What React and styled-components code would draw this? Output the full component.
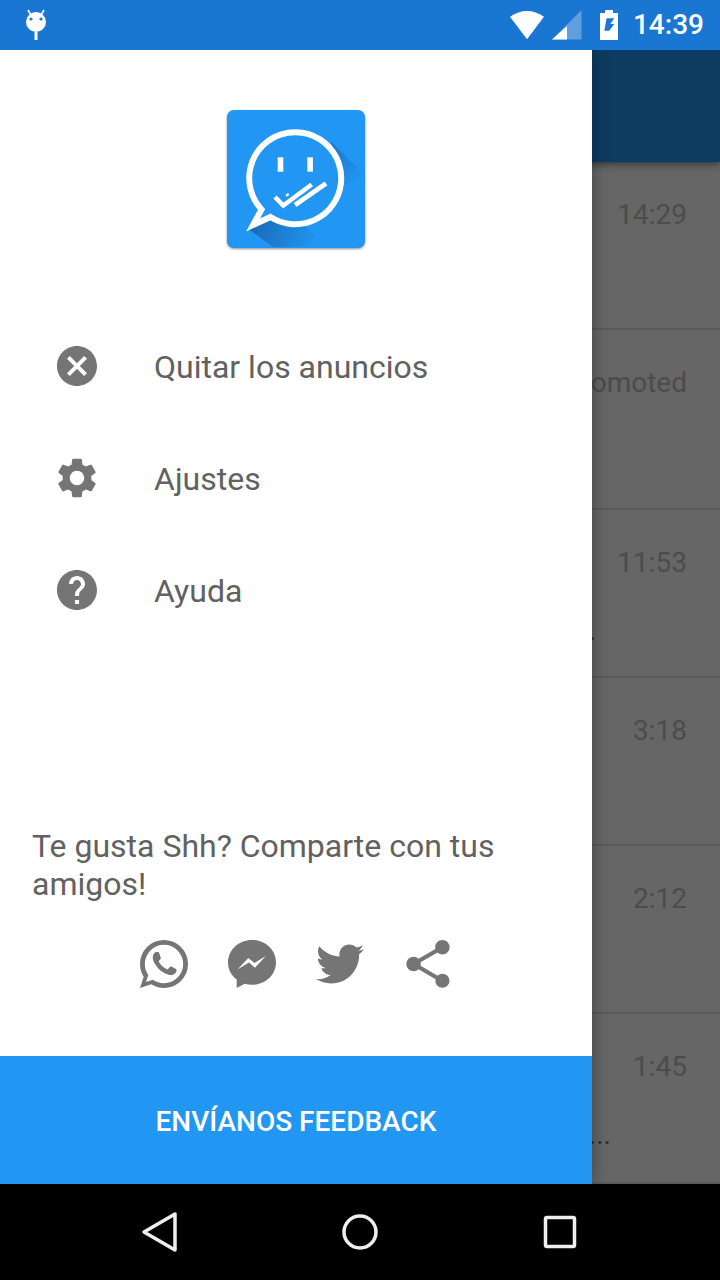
import styled, { createGlobalStyle } from "styled-components";
import { MdCancel, MdSettings, MdHelp, MdShare } from "react-icons/md";
import { FaTwitter } from "react-icons/fa";

const GlobalStyle = createGlobalStyle`
  html, body {
    margin: 0;
    padding: 0;
    background: #000;
  }
  body {
    font-family: Roboto, "Liberation Sans", sans-serif;
  }
`;

const Screen = styled.div`
  width: 720px;
  height: 1280px;
  display: flex;
  flex-direction: column;
  overflow: hidden;
`;

const StatusBar = styled.div`
  height: 50px;
  flex: none;
  background: #1976d2;
  display: flex;
  align-items: center;
  justify-content: space-between;
  padding: 0 16px 0 24px;
  color: #fff;
  position: relative;
  z-index: 3;
`;

const StatusIcons = styled.div`
  display: flex;
  align-items: center;
`;

const StatusIcon = styled.svg`
  display: block;
  margin-right: ${(p) => p.$gap}px;
`;

const Clock = styled.span`
  font-size: 28px;
  font-weight: 500;
  line-height: 50px;
`;

const Main = styled.div`
  flex: 1;
  position: relative;
  overflow: hidden;
  background: #fff;
`;

const Toolbar = styled.div`
  height: 112px;
  background: #2196f3;
  box-shadow: 0 2px 8px rgba(0, 0, 0, 0.5);
  position: relative;
`;

const Row = styled.div`
  height: ${(p) => p.$height}px;
  box-sizing: border-box;
  border-bottom: 2px solid #e0e0e0;
  padding: 35px 33px 0 0;
  display: flex;
  flex-direction: column;
  align-items: flex-end;
`;

const RowTime = styled.div`
  font-size: 28px;
  line-height: 36px;
  color: #bdbdbd;
`;

const Preview = styled.div`
  width: ${(p) => p.$width}px;
  align-self: flex-start;
  text-align: right;
  margin-top: 32px;
  font-size: 28px;
  line-height: 36px;
  color: #707070;
`;

const Scrim = styled.div`
  position: absolute;
  inset: 0;
  background: rgba(0, 0, 0, 0.6);
`;

const Drawer = styled.aside`
  position: absolute;
  left: 0;
  top: 0;
  bottom: 0;
  width: 592px;
  background: #fff;
  box-shadow: 0 0 16px rgba(0, 0, 0, 0.35);
  display: flex;
  flex-direction: column;
`;

const LogoWrap = styled.div`
  display: flex;
  justify-content: center;
  padding: 60px 0 62px;
`;

const Logo = styled.svg`
  display: block;
  filter: drop-shadow(0 1px 1px rgba(0, 0, 0, 0.45));
`;

const Menu = styled.nav`
  display: flex;
  flex-direction: column;
`;

const MenuItem = styled.div`
  height: 112px;
  display: flex;
  align-items: center;
  padding-left: 53px;
  color: #757575;
  font-size: 32px;

  svg {
    display: block;
    flex: none;
    margin-right: 53px;
  }
`;

const MenuLabel = styled.span`
  color: #616161;
  padding-top: 2px;
`;

const ShareBlock = styled.div`
  margin-top: auto;
  padding: 0 32px 68px;
`;

const ShareText = styled.p`
  margin: 0 0 37px;
  font-size: 32px;
  line-height: 38px;
  color: #616161;
`;

const ShareIcons = styled.div`
  display: flex;
  justify-content: center;
  gap: 40px;
  color: #757575;
  height: 48px;

  svg {
    display: block;
    flex: none;
  }
`;

const Feedback = styled.button`
  height: 128px;
  flex: none;
  border: 0;
  padding: 2px 0 0;
  background: #2196f3;
  color: #fff;
  font-family: inherit;
  font-size: 28px;
  font-weight: 500;
  text-transform: uppercase;
`;

const NavBar = styled.div`
  height: 96px;
  flex: none;
  background: #000;
  display: grid;
  grid-template-columns: repeat(3, 200px);
  padding: 0 60px;
  align-items: center;
  justify-items: center;
  position: relative;
  z-index: 3;
`;

const NavIcon = styled.svg`
  display: block;
  fill: none;
  stroke: #eeeeee;
  stroke-width: 3.5;
  stroke-linejoin: round;
`;

const rows = [
  { height: 168, time: "14:29" },
  { height: 180, time: "Promoted" },
  { height: 168, time: "11:53", preview: ".", width: 596 },
  { height: 168, time: "3:18" },
  { height: 168, time: "2:12" },
  { height: 170, time: "1:45", preview: "...", width: 611 },
];

function Mascot() {
  return (
    <svg width="24" height="32" viewBox="0 0 24 32" style={{ display: "block" }}>
      <path d="M4 1l3.5 6M20 1l-3.5 6" stroke="#fff" strokeWidth="1.6" />
      <circle cx="12" cy="13" r="10" fill="#fff" />
      <circle cx="7" cy="10" r="1.6" fill="#1976d2" />
      <circle cx="17" cy="10" r="1.6" fill="#1976d2" />
      <rect x="10.5" y="23" width="3" height="8" fill="#fff" />
    </svg>
  );
}

function AppLogo() {
  return (
    <Logo width="138" height="138" viewBox="0 0 138 138">
      <defs>
        <linearGradient id="tailShade" gradientUnits="userSpaceOnUse" x1="24" y1="112" x2="84" y2="142">
          <stop offset="0" stopColor="#1a68b4" />
          <stop offset="1" stopColor="#2196f3" />
        </linearGradient>
        <linearGradient id="topShade" gradientUnits="userSpaceOnUse" x1="104" y1="40" x2="134" y2="68">
          <stop offset="0" stopColor="#1c78cc" />
          <stop offset="1" stopColor="#2196f3" />
        </linearGradient>
      </defs>
      <rect width="138" height="138" rx="7" fill="#2196f3" />
      <path d="M20 118L46 137H100L60 100Z" fill="url(#tailShade)" />
      <path d="M104 32L137 64V84L112 70Z" fill="url(#topShade)" />
      <path
        d="M34.5 99.5L26 115L43.5 107A46 46 0 1 0 34.5 99.5Z"
        fill="#2196f3"
        stroke="#fff"
        strokeWidth="6"
      />
      <rect x="50.7" y="47.3" width="5.6" height="14.4" fill="#fff" />
      <rect x="80.3" y="47.3" width="5.6" height="14.4" fill="#fff" />
      <path d="M48 87L56.3 95.5L84.7 74.5" fill="none" stroke="#fff" strokeWidth="4.6" />
      <path d="M68 95L99 73.5" fill="none" stroke="#fff" strokeWidth="4.6" />
      <path d="M59 85.7L61.7 84" fill="none" stroke="#fff" strokeWidth="2.4" />
    </Logo>
  );
}

function App() {
  return (
    <>
      <GlobalStyle />
      <Screen>
        <StatusBar>
          <Mascot />
          <StatusIcons>
            <StatusIcon $gap={8} width="34" height="30" viewBox="0 0 34 30">
              <path d="M0 6.7Q17 -4.7 34 6.7L17 29.3Z" fill="#fff" />
            </StatusIcon>
            <StatusIcon $gap={18} width="30" height="30" viewBox="0 0 30 30">
              <path d="M0 29.5L29.5 0V29.5Z" fill="#fff" opacity="0.3" />
              <path d="M0 29.5L15 16V29.5Z" fill="#fff" />
            </StatusIcon>
            <StatusIcon $gap={15} width="18" height="30" viewBox="0 0 18 30">
              <path
                fillRule="evenodd"
                fill="#fff"
                d="M0 3H5V0H13V3H18V30H0ZM6.6 8.3L4.3 20.7H9.3L6 25L14.3 14H10.3L14.3 8.3Z"
              />
            </StatusIcon>
            <Clock>14:39</Clock>
          </StatusIcons>
        </StatusBar>

        <Main>
          <Toolbar />
          {rows.map((row) => (
            <Row key={row.time} $height={row.height}>
              <RowTime>{row.time}</RowTime>
              {row.preview && <Preview $width={row.width}>{row.preview}</Preview>}
            </Row>
          ))}
          <Scrim />
          <Drawer>
            <LogoWrap>
              <AppLogo />
            </LogoWrap>
            <Menu>
              <MenuItem>
                <MdCancel size={48} />
                <MenuLabel>Quitar los anuncios</MenuLabel>
              </MenuItem>
              <MenuItem>
                <MdSettings size={48} />
                <MenuLabel>Ajustes</MenuLabel>
              </MenuItem>
              <MenuItem>
                <MdHelp size={48} />
                <MenuLabel>Ayuda</MenuLabel>
              </MenuItem>
            </Menu>
            <ShareBlock>
              <ShareText>Te gusta Shh? Comparte con tus amigos!</ShareText>
              <ShareIcons>
                <svg width="48" height="48" viewBox="2 2 20 20" fill="currentColor">
                  <path d="M16.75,13.96C17,14.09 17.16,14.16 17.21,14.26C17.27,14.37 17.25,14.87 17,15.44C16.8,16 15.76,16.54 15.3,16.56C14.84,16.58 14.83,16.92 12.34,15.83C9.85,14.74 8.35,12.08 8.23,11.91C8.11,11.74 7.27,10.53 7.31,9.3C7.36,8.08 8,7.5 8.26,7.26C8.5,7 8.77,6.97 8.94,7H9.41C9.56,7 9.77,6.94 9.96,7.45L10.65,9.32C10.71,9.45 10.75,9.6 10.66,9.76L10.39,10.17L10,10.59C9.88,10.71 9.74,10.84 9.88,11.09C10,11.35 10.5,12.18 11.2,12.87C12.11,13.75 12.91,14.04 13.15,14.17C13.39,14.31 13.54,14.29 13.69,14.13L14.5,13.19C14.69,12.94 14.85,13 15.08,13.08L16.75,13.96M12,2A10,10 0 0,1 22,12A10,10 0 0,1 12,22C10.03,22 8.2,21.43 6.65,20.45L2,22L3.55,17.35C2.57,15.8 2,13.97 2,12A10,10 0 0,1 12,2M12,4A8,8 0 0,0 4,12C4,13.72 4.54,15.31 5.46,16.61L4.5,19.5L7.39,18.54C8.69,19.46 10.28,20 12,20A8,8 0 0,0 20,12A8,8 0 0,0 12,4Z" />
                </svg>
                <svg width="48" height="48" viewBox="0 0 48 48" fill="currentColor">
                  <path
                    fillRule="evenodd"
                    d="M24 0C10.7 0 0 10 0 22.4C0 29.4 3.4 35.500 8.700 39.600V48L16.700 43.700C19 44.400 21.400 44.700 24 44.700C37.300 44.700 48 34.800 48 22.400C48 10 37.300 0 24 0ZM9.500 29.500L20.300 18L26.500 23L37.800 16L27 27.800L21 22.600Z"
                  />
                </svg>
                <FaTwitter size={48} />
                <MdShare size={48} viewBox="2 2 20 20" />
              </ShareIcons>
            </ShareBlock>
            <Feedback>Envíanos feedback</Feedback>
          </Drawer>
        </Main>

        <NavBar>
          <NavIcon width="48" height="48" viewBox="0 0 48 48">
            <path d="M8 24L39 6V42Z" />
          </NavIcon>
          <NavIcon width="48" height="48" viewBox="0 0 48 48">
            <circle cx="24" cy="24" r="16" />
          </NavIcon>
          <NavIcon width="48" height="48" viewBox="0 0 48 48">
            <rect x="9.500" y="9.500" width="29" height="29" rx="1.500" />
          </NavIcon>
        </NavBar>
      </Screen>
    </>
  );
}

export default App;
